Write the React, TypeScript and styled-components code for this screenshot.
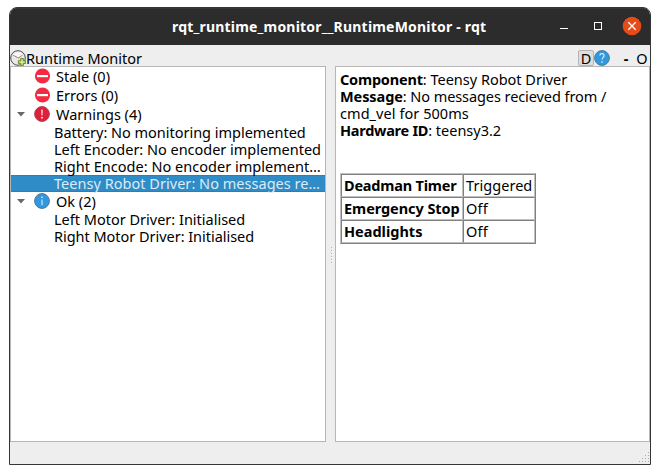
import React from "react";
import styled, { createGlobalStyle } from "styled-components";

const GlobalStyle = createGlobalStyle`
  * { box-sizing: border-box; }
  body {
    margin: 0;
    background: #fff;
    color: #000;
    font: 14.5px/17px "Noto Sans", "Open Sans", sans-serif;
    overflow: hidden;
  }
`;

const Desktop = styled.div`
  width: 660px;
  height: 474px;
  padding: 7px 9px 9px;
`;

const Window = styled.div`
  width: 642px;
  height: 458px;
  display: flex;
  flex-direction: column;
  border: 1px solid #353537;
  border-radius: 8px 8px 0 0;
  background: #eeeeee;
  overflow: hidden;
`;

const TitleBar = styled.header`
  height: 37px;
  flex: none;
  display: grid;
  grid-template-columns: 1fr 92px;
  align-items: center;
  background: #2c2c2c;
  border-top: 1px solid #373737;
  color: #fff;
`;

const Title = styled.h1`
  margin: 0;
  padding: 0 0 1px 162px;
  font-size: 14px;
  line-height: 18px;
  font-weight: 700;
  white-space: pre;
`;

const WindowControls = styled.div`
  display: flex;
  svg { display: block; }
`;

const DockBar = styled.div`
  height: 21px;
  flex: none;
  display: flex;
  align-items: flex-end;
`;

const DockTitle = styled.span`
  flex: 1;
  height: 16px;
  line-height: 17px;
  white-space: pre;
`;

const DockIcon = styled.svg`
  width: 16px;
  height: 16px;
  flex: none;
  display: block;
`;

const DockButton = styled.span<{ $raised?: boolean; $bold?: boolean }>`
  width: 16px;
  height: 16px;
  line-height: ${(p) => (p.$raised ? 15 : 17)}px;
  text-align: center;
  font-weight: ${(p) => (p.$bold ? 700 : 400)};
  border: ${(p) => (p.$raised ? "1px solid #b4b4b4" : "none")};
  border-radius: 2px;
  background: ${(p) => (p.$raised ? "#dedede" : "transparent")};
`;

const DockGap = styled.span`
  width: 8px;
`;

const Splitter = styled.main`
  height: 376px;
  flex: none;
  display: grid;
  grid-template-columns: 316px 9px 315px;
`;

const Pane = styled.section`
  background: #fff;
  border: 1px solid #b6b6b6;
  overflow: hidden;
`;

const Handle = styled.div`
  display: flex;
  align-items: center;
  justify-content: center;
  padding-top: 3px;
`;

const GroupRow = styled.div`
  height: 19px;
  display: grid;
  grid-template-columns: 23px 22px 1fr;
  align-items: center;
  line-height: 19px;
  svg { display: block; }
`;

const ItemRow = styled.div<{ $selected?: boolean }>`
  height: 17px;
  padding-left: 43px;
  white-space: pre;
  color: ${(p) => (p.$selected ? "#dcebf5" : "#000")};
  background: ${(p) => (p.$selected ? "#308cc6" : "transparent")};
  box-shadow: ${(p) => (p.$selected ? "inset 0 1px #2a7fb5, inset 0 -1px #2a7fb5" : "none")};
`;

const Spaced = styled.span<{ $ls: number }>`
  letter-spacing: ${(p) => p.$ls}px;
  white-space: pre;
`;

const Strong = styled(Spaced)`
  font-weight: 700;
`;

const Details = styled(Pane)`
  padding: 4px 4px;
`;

const Line = styled.div`
  height: 17px;
  white-space: pre;
`;

const Table = styled.table`
  margin-top: 34px;
  border-collapse: separate;
  border-spacing: 0;
  table-layout: fixed;
  width: 196px;
  border: 1px solid;
  border-color: #c0c0c0 #808080 #808080 #c0c0c0;
`;

const Cell = styled.td<{ $w: number; $bold?: boolean }>`
  width: ${(p) => p.$w}px;
  height: 23px;
  padding: 0 0 0 2px;
  border: 1px solid;
  border-color: #808080 #c0c0c0 #c0c0c0 #808080;
  font-weight: ${(p) => (p.$bold ? 700 : 400)};
  white-space: pre;
`;

const StatusBar = styled.footer`
  flex: 1;
  display: flex;
  align-items: flex-end;
  justify-content: flex-end;
  padding: 0 1px 1px 0;
`;

const NoEntry = () => (
  <svg width="17" height="18" viewBox="0 0 17 18">
    <circle cx="8.5" cy="8" r="7.6" fill="#f22b43" />
    <rect x="3" y="7" width="11" height="2.2" fill="#fff" />
  </svg>
);

const Warn = () => (
  <svg width="16" height="18" viewBox="0 0 16 18">
    <circle cx="8" cy="8" r="7.4" fill="#df2039" stroke="#a84450" />
    <path d="M7.5 3.8h1l-.2 5.4h-.6z" fill="#fff" stroke="#fbd5da" strokeWidth=".4" />
    <circle cx="8" cy="11.7" r=".9" fill="#fff" />
  </svg>
);

const Info = () => (
  <svg width="16" height="18" viewBox="0 0 16 18">
    <circle cx="8" cy="8" r="7.4" fill="#3297de" stroke="#4c7896" />
    <circle cx="8" cy="4.3" r=".8" fill="#fff" />
    <path d="M8 6.5v5.8" stroke="#d4ecff" strokeWidth="1.1" />
  </svg>
);

const Arrow = () => (
  <svg width="23" height="19" viewBox="0 0 23 19">
    <path d="M6 7h8l-4 4.5z" fill="#686868" />
  </svg>
);

const Monitor = () => (
  <DockIcon viewBox="0 0 16 16">
    <circle cx="8" cy="8" r="7.3" fill="#e9e9e9" stroke="#4a4a4a" />
    <path d="M2.6 4.4a7 7 0 0 1 10.8 0L8.4 8z" fill="#f7f7f7" />
    <path d="M3 5.2 8.4 8l4.2-3" fill="none" stroke="#8a8a8a" strokeWidth=".9" />
    <path d="M8.3 8.2 11 6.2M6.4 6.9l2 1.2" stroke="#cf7f7f" strokeWidth=".9" />
    <path d="M10.6 8.5h2.8v2.2h2.2v2.8h-2.2v2.1h-2.8v-2.1H8.4v-2.8h2.2z" fill="#9cc850" stroke="#5f8c26" strokeWidth=".9" />
    <path d="M12 9.6v5M9.5 12.1h5" stroke="#e2f5b1" />
  </DockIcon>
);

const Help = () => (
  <DockIcon viewBox="0 0 16 16">
    <circle cx="8" cy="8" r="7.4" fill="#3298dd" stroke="#477c9e" />
    <path d="M5.8 5.5c.4-2.8 4.7-2.2 4.3.3-.2 1.2-2 1.7-2 3.8" fill="none" stroke="#d9efff" strokeWidth="1.2" />
    <circle cx="8" cy="12" r=".8" fill="#fff" />
  </DockIcon>
);

type Item = { text: string; ls: number; selected?: boolean };
type Group = { label: string; icon: React.ReactNode; items: Item[] };

const groups: Group[] = [
  { label: "Stale (0)", icon: <NoEntry />, items: [] },
  { label: "Errors (0)", icon: <NoEntry />, items: [] },
  {
    label: "Warnings (4)",
    icon: <Warn />,
    items: [
      { text: "Battery: No monitoring implemented", ls: -0.02 },
      { text: "Left Encoder: No encoder implemented", ls: -0.02 },
      { text: "Right Encode: No encoder implement…", ls: 0.02 },
      { text: "Teensy Robot Driver: No messages re…", ls: 0.03, selected: true },
    ],
  },
  {
    label: "Ok (2)",
    icon: <Info />,
    items: [
      { text: "Left Motor Driver: Initialised", ls: 0 },
      { text: "Right Motor Driver: Initialised", ls: -0.03 },
    ],
  },
];

const details = [
  { name: "Component", value: ": Teensy Robot Driver", nls: -0.2, vls: 0 },
  { name: "Message", value: ": No messages recieved from /", nls: -0.08, vls: -0.08 },
  { name: "", value: "cmd_vel for 500ms", nls: 0, vls: 0.06 },
  { name: "Hardware ID", value: ": teensy3.2", nls: -0.27, vls: 0 },
];

const rows = [
  { name: "Deadman Timer", value: "Triggered", nls: -0.2, vls: 0.05 },
  { name: "Emergency Stop", value: "Off", nls: -0.06, vls: 0.2 },
  { name: "Headlights", value: "Off", nls: 0, vls: 0.2 },
];

const gripDots = [[9, 0], [6, 3], [9, 3], [3, 6], [6, 6], [9, 6], [0, 9], [3, 9], [6, 9], [9, 9]];

export default function App() {
  return (
    <Desktop>
      <GlobalStyle />
      <Window>
        <TitleBar>
          <Title><Spaced $ls={0.2}>rqt_runtime_monitor__RuntimeMonitor - rqt</Spaced></Title>
          <WindowControls>
            <svg width="92" height="36" viewBox="0 0 92 36">
              <path d="M2 19.5h8" stroke="#fff" />
              <rect x="36.5" y="13.5" width="7" height="7" fill="none" stroke="#fff" />
              <circle cx="74" cy="17" r="9.3" fill="#e54c19" />
              <path d="M70.3 13.3l7.4 7.4M77.7 13.3l-7.4 7.4" stroke="#fff" strokeWidth="1.3" />
            </svg>
          </WindowControls>
        </TitleBar>
        <DockBar>
          <Monitor />
          <DockTitle><Spaced $ls={0}>Runtime Monitor</Spaced></DockTitle>
          <DockButton $raised>D</DockButton>
          <Help />
          <DockGap />
          <DockButton $bold>-</DockButton>
          <DockButton>O</DockButton>
        </DockBar>
        <Splitter>
          <Pane>
            {groups.map((g) => (
              <React.Fragment key={g.label}>
                <GroupRow>
                  {g.items.length ? <Arrow /> : <span />}
                  {g.icon}
                  <span>{g.label}</span>
                </GroupRow>
                {g.items.map((i) => (
                  <ItemRow key={i.text} $selected={i.selected}>
                    <Spaced $ls={i.ls}>{i.text}</Spaced>
                  </ItemRow>
                ))}
              </React.Fragment>
            ))}
          </Pane>
          <Handle>
            <svg width="9" height="18" viewBox="0 0 9 18">
              {[0, 3, 6, 9, 12, 15].map((y) => (
                <g key={y}>
                  <rect x="5" y={y} width="1" height="1" fill="#b4b4b4" />
                  <rect x="6" y={y + 1} width="1" height="1" fill="#fbfbfb" />
                </g>
              ))}
            </svg>
          </Handle>
          <Details>
            {details.map((d) => (
              <Line key={d.value}>
                {d.name && <Strong $ls={d.nls}>{d.name}</Strong>}
                <Spaced $ls={d.vls}>{d.value}</Spaced>
              </Line>
            ))}
            <Table>
              <tbody>
                {rows.map((r) => (
                  <tr key={r.name}>
                    <Cell $w={122} $bold><Spaced $ls={r.nls}>{r.name}</Spaced></Cell>
                    <Cell $w={72}><Spaced $ls={r.vls}>{r.value}</Spaced></Cell>
                  </tr>
                ))}
              </tbody>
            </Table>
          </Details>
        </Splitter>
        <StatusBar>
          <svg width="10" height="11" viewBox="0 0 10 11">
            {gripDots.map(([x, y]) => (
              <rect key={`${x}-${y}`} x={x} y={y} width="1" height="1" fill="#a8a8a8" />
            ))}
          </svg>
        </StatusBar>
      </Window>
    </Desktop>
  );
}
